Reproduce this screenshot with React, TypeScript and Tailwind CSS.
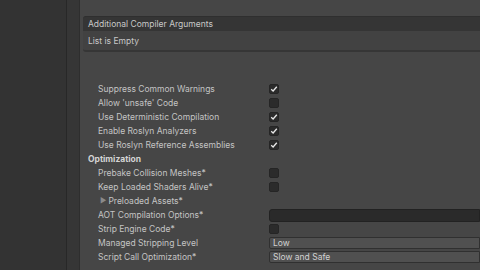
import React from 'react';

type Row =
  | { kind: 'check'; label: string; checked: boolean }
  | { kind: 'header'; label: string }
  | { kind: 'foldout'; label: string }
  | { kind: 'text'; label: string }
  | { kind: 'select'; label: string; value: string };

const rows: Row[] = [
  { kind: 'check', label: 'Suppress Common Warnings', checked: true },
  { kind: 'check', label: "Allow 'unsafe' Code", checked: false },
  { kind: 'check', label: 'Use Deterministic Compilation', checked: true },
  { kind: 'check', label: 'Enable Roslyn Analyzers', checked: true },
  { kind: 'check', label: 'Use Roslyn Reference Assemblies', checked: true },
  { kind: 'header', label: 'Optimization' },
  { kind: 'check', label: 'Prebake Collision Meshes*', checked: false },
  { kind: 'check', label: 'Keep Loaded Shaders Alive*', checked: false },
  { kind: 'foldout', label: 'Preloaded Assets*' },
  { kind: 'text', label: 'AOT Compilation Options*' },
  { kind: 'check', label: 'Strip Engine Code*', checked: false },
  { kind: 'select', label: 'Managed Stripping Level', value: 'Low' },
  { kind: 'select', label: 'Script Call Optimization*', value: 'Slow and Safe' },
];

function Checkbox({ checked }: { checked: boolean }) {
  return (
    <div className="w-[10px] h-[10px] rounded-[2px] bg-[#2b2b2b] border border-[#252525] flex items-center justify-center">
      {checked && (
        <svg width="8" height="8" viewBox="0 0 8 8">
          <path d="M1.2 4.3 L3.1 6 L6.8 1.8" fill="none" stroke="#e8e8e8" strokeWidth="1.3" />
        </svg>
      )}
    </div>
  );
}

export default function App() {
  return (
    <div
      className="w-[480px] h-[270px] flex overflow-hidden text-[8.5px] text-[#c4c4c4]"
      style={{ fontFamily: 'Inter, "Noto Sans", sans-serif' }}
    >
      <div className="w-[67px] h-full bg-[#333333] border-r border-[#282828]" />
      <div className="w-[13px] h-full bg-[#363636] border-r border-[#2e2e2e]" />
      <div className="flex-1 h-full bg-[#464646] pl-[3px] pt-[16px]">
        <div className="h-[15px] bg-[#353535] rounded-tl-[3px] border-t border-[#2f2f2f] flex items-center pl-[5px] text-[#c8c8c8]">
          Additional Compiler Arguments
        </div>
        <div className="h-[21px] bg-[#424242] border-b-2 border-[#363636] rounded-bl-[3px] flex items-center pl-[5px] pt-[1px] text-[#c8c8c8]">
          List is Empty
        </div>
        <div className="h-[30px]" />
        {rows.map((r, i) => (
          <div key={i} className="h-[14px] flex items-center">
            {r.kind === 'header' ? (
              <div className="pl-[5px] font-bold text-[#d4d4d4]">{r.label}</div>
            ) : (
              <>
                <div className="w-[186px] shrink-0 flex items-center pl-[15px]">
                  {r.kind === 'foldout' && (
                    <span className="text-[7px] text-[#8a8a8a] mr-[2px] ml-[2px]">▶</span>
                  )}
                  <span>{r.label}</span>
                </div>
                {r.kind === 'check' && <Checkbox checked={r.checked} />}
                {r.kind === 'text' && (
                  <div className="flex-1 h-[13px] bg-[#2a2a2a] border border-[#222222] rounded-l-[3px]" />
                )}
                {r.kind === 'select' && (
                  <div className="flex-1 h-[12px] bg-[#505050] border border-[#303030] rounded-l-[2px] flex items-center pl-[3px] text-[#d2d2d2]">
                    {r.value}
                  </div>
                )}
              </>
            )}
          </div>
        ))}
      </div>
    </div>
  );
}
